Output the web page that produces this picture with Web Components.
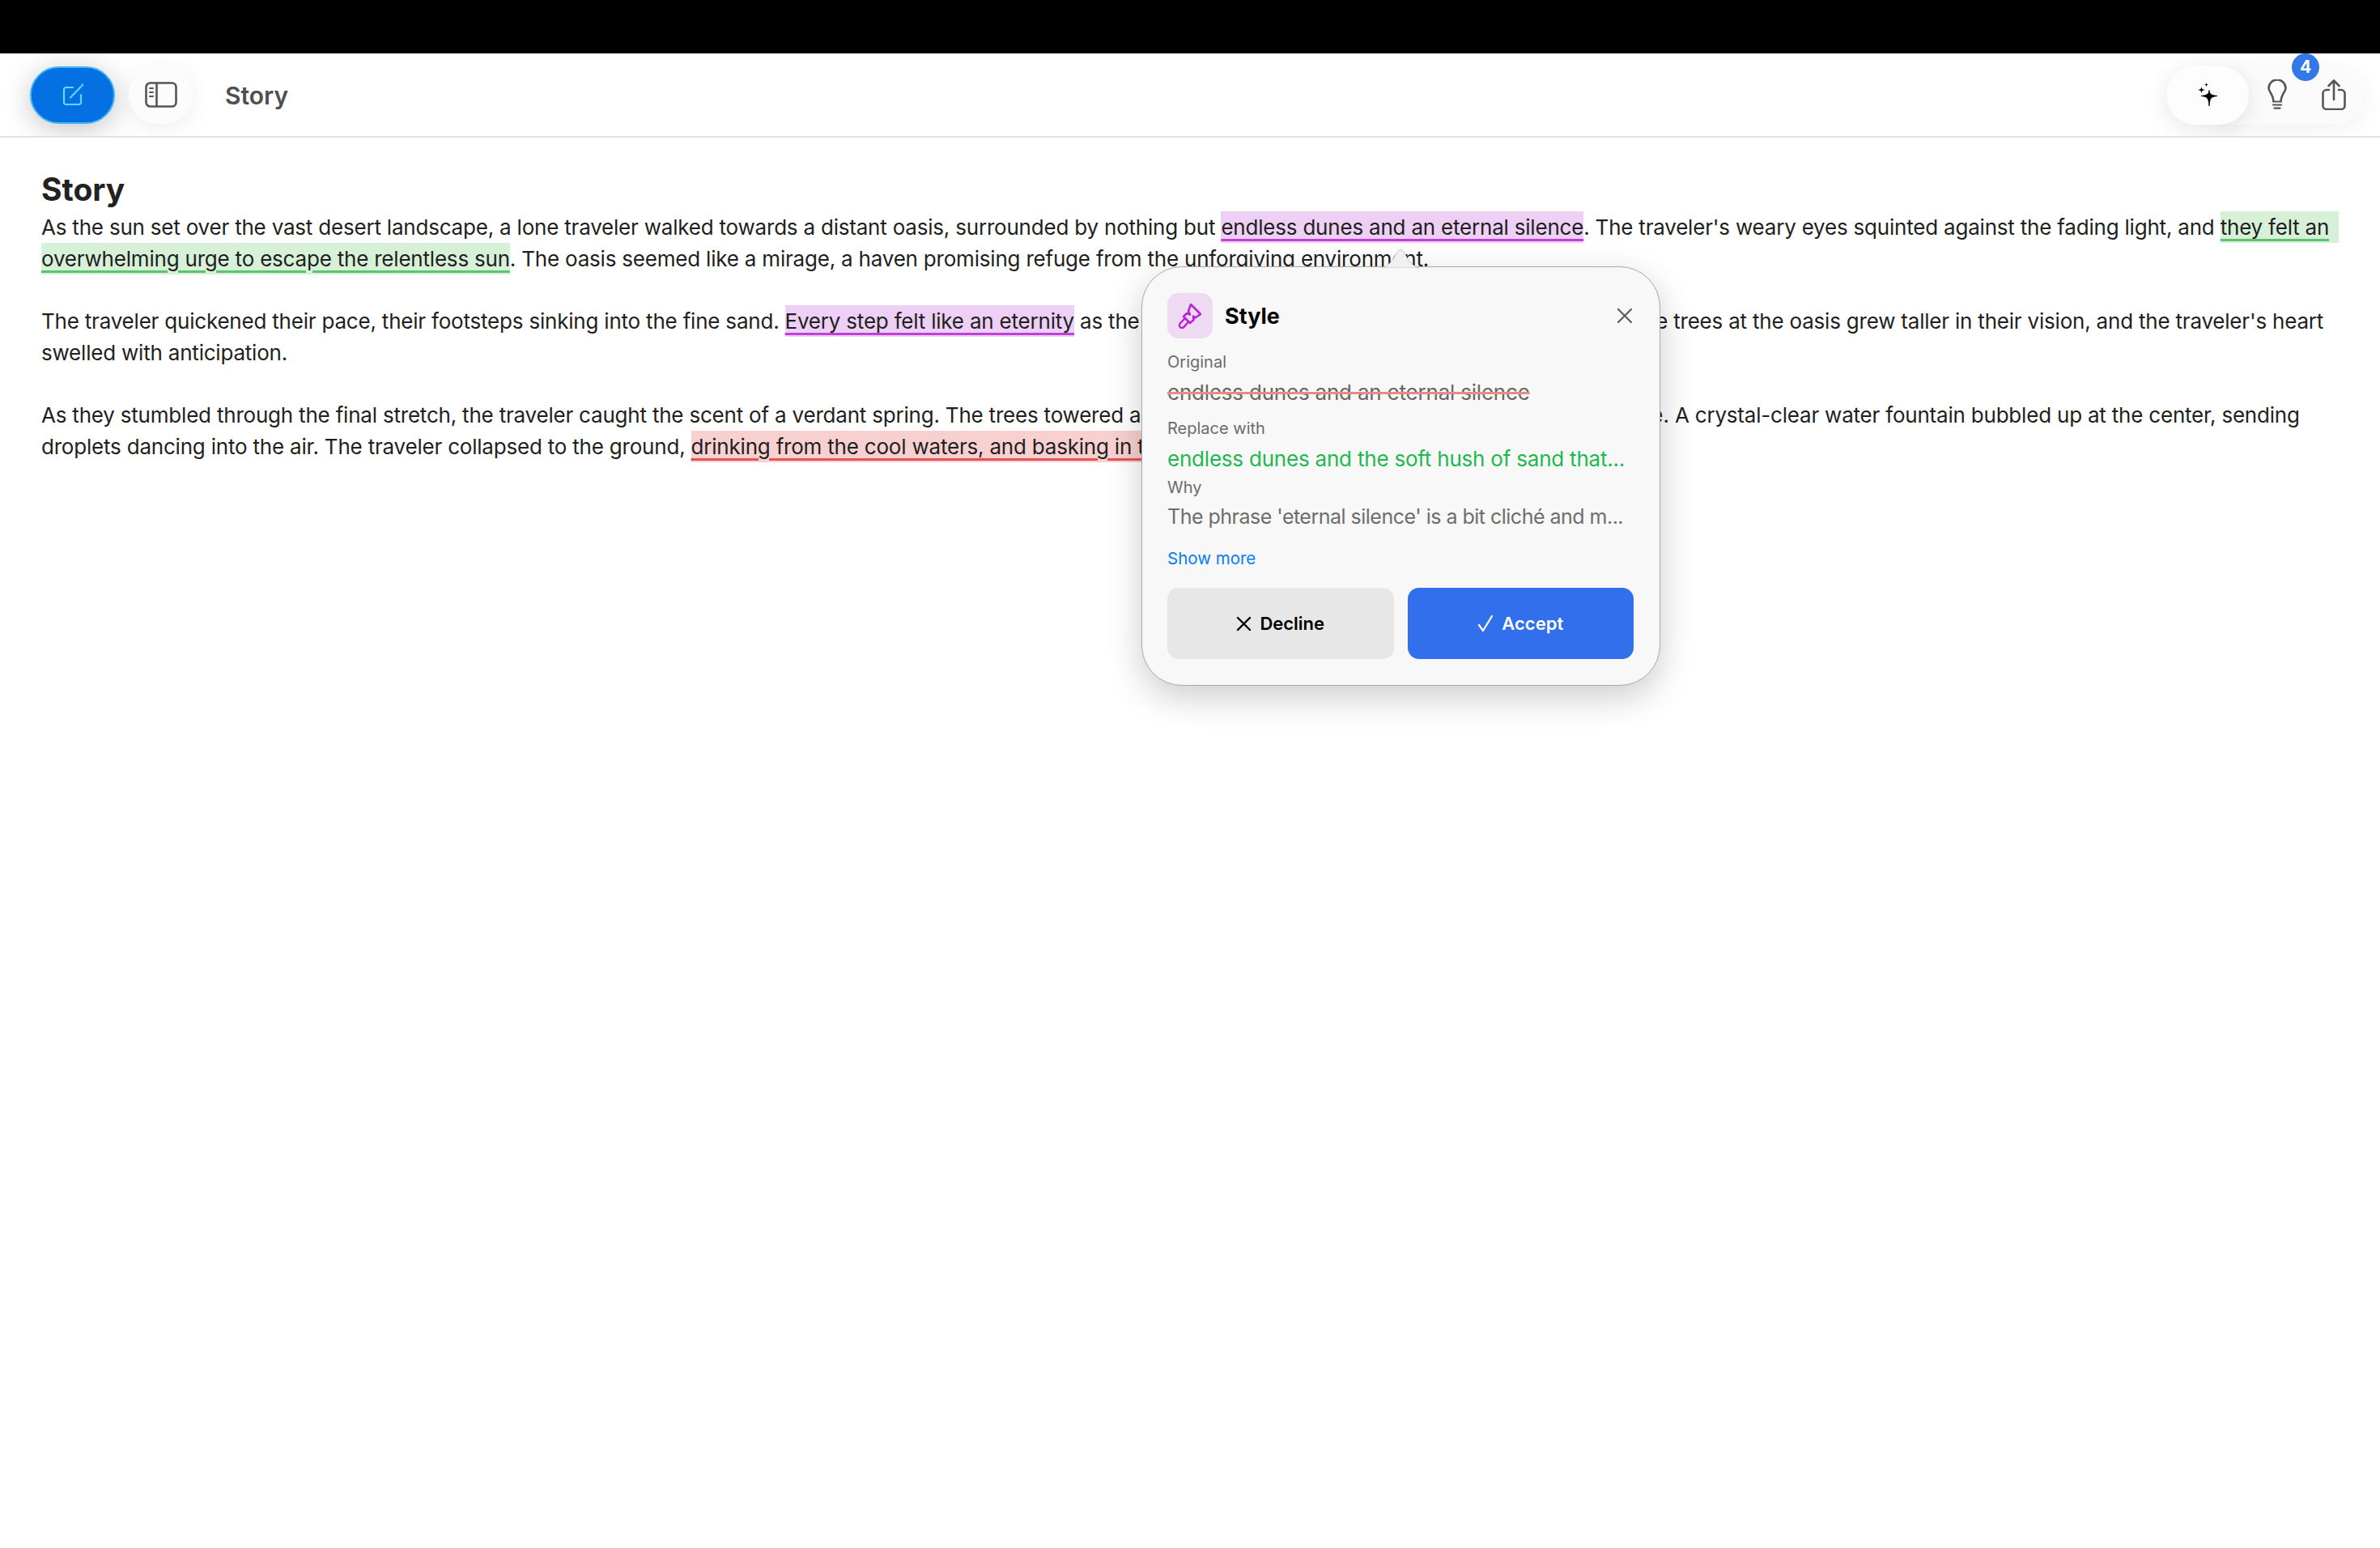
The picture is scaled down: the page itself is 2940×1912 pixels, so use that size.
<!DOCTYPE html>
<html lang="en">
<head>
<meta charset="utf-8">
<title>Story</title>
<style>
  html, body { margin: 0; background: #fff; }
  body { width: 2940px; height: 1912px; overflow: hidden; position: relative; font-family: Inter, "Liberation Sans", sans-serif; }
</style>
</head>
<body>
<top-bar heading="Story" count="4"></top-bar>
<story-doc heading="Story">
  <p>As the sun set over the vast desert landscape, a lone traveler walked towards a distant oasis, surrounded by nothing but <hl-span kind="style">endless dunes and an eternal silence</hl-span>. The traveler's weary eyes squinted against the fading light, and <hl-span kind="good" class="tail">they felt an</hl-span> <hl-span kind="good">overwhelming urge to escape the relentless sun</hl-span>. The oasis seemed like a mirage, a haven promising refuge from the unforgiving environment.</p>
  <p>The traveler quickened their pace, their footsteps sinking into the fine sand. <hl-span kind="style">Every step felt like an eternity</hl-span> as the <span style="letter-spacing:-.31px">sun dipped low, painting the sky in shades of red.</span> The trees at the oasis grew taller in their vision, and the traveler's heart swelled with anticipation.</p>
  <p>As they stumbled through the final stretch, the traveler caught the scent of a verdant spring. The trees towered above, <span style="letter-spacing:-.07px">their emerald fronds offering a welcome shade.</span> A crystal-clear water fountain bubbled up at the center, sending droplets dancing into the air. The traveler collapsed to the ground, <hl-span kind="bad">drinking from the cool waters, and basking in the shade</hl-span>.</p>
</story-doc>
<suggest-popover></suggest-popover>

<script>
class TopBar extends HTMLElement {
  connectedCallback() {
    const titulo = this.getAttribute('heading') ?? '';
    const count = this.getAttribute('count') ?? '';
    this.attachShadow({ mode: 'open' });
    this.shadowRoot.innerHTML = /* html */`
      <style>
        :host { display: block; }
        .notch { height: 66px; background: #000; }
        .bar {
          height: 102px; border-bottom: 2px solid #e3e3e3; background: #fff;
          display: flex; align-items: center; padding: 0 20px 0 37px; overflow: hidden;
        }
        .compose {
          width: 105px; height: 71px; box-sizing: border-box; border-radius: 36px;
          background: #0570e2; border: 2px solid #3fb4fb;
          box-shadow: 0 6px 34px rgba(0,0,0,.24);
          display: flex; align-items: center; justify-content: center;
        }
        .side {
          width: 79px; height: 72px; margin-left: 17px; border-radius: 36px; background: #fcfcfc;
          box-shadow: 0 6px 30px rgba(0,0,0,.07);
          display: flex; align-items: center; justify-content: center;
        }
        .title { margin-left: 40px; padding-top: 2px; font-size: 30px; font-weight: 600; color: #4f4f4f; }
        .grow { flex: 1; }
        .group { display: flex; align-items: center; position: relative; }
        .spark {
          width: 102px; height: 73px; border-radius: 37px; background: #fdfdfd; position: relative; z-index: 1;
          box-shadow: 0 6px 30px rgba(0,0,0,.1);
          display: flex; align-items: center; justify-content: center;
        }
        .tools {
          margin-left: -40px; padding-left: 40px; width: 142px; height: 73px; border-radius: 0 37px 37px 0;
          background: #fbfbfb; box-shadow: 0 6px 30px rgba(0,0,0,.06);
          display: flex; align-items: center; justify-content: space-between;
        }
        .tools svg:first-child { margin-left: 23px; }
        .tools svg:last-child { margin-right: 22px; }
        .badge {
          position: absolute; left: 155px; top: -15px; width: 34px; height: 34px; border-radius: 50%;
          background: #3378e6; color: #fff; font-size: 21px; font-weight: 700;
          display: flex; align-items: center; justify-content: center; z-index: 2;
        }
      </style>
      <div class="notch"></div>
      <div class="bar">
        <div class="compose">
          <svg width="26" height="28" viewBox="0 0 26 28" fill="none" stroke="#67d5ff" stroke-width="2.2" stroke-linecap="round" stroke-linejoin="round">
            <path d="M13 5H4.500A2.500 2.500 0 0 0 2 7.500v16A2.500 2.500 0 0 0 4.500 26h16a2.500 2.500 0 0 0 2.500-2.500V14"/>
            <path d="M10 17.500 23 4"/><circle cx="25" cy="2" r=".6"/>
          </svg>
        </div>
        <div class="side">
          <svg width="40" height="32" viewBox="0 0 40 32" fill="none" stroke="#565656" stroke-width="2.600" stroke-linecap="round">
            <rect x="1.500" y="1.500" width="37" height="29" rx="5"/>
            <path d="M14.500 2v28"/><path d="M6 8h4M6 13h4M6 18h4" stroke-width="2"/>
          </svg>
        </div>
        <div class="title">${titulo}</div>
        <div class="grow"></div>
        <div class="group">
          <div class="spark">
            <svg width="26" height="30" viewBox="0 0 26 30" fill="#000">
              <path d="M15 9.500c.9 4.800 2 6 10 7-8 1-9.100 2.300-10 12.500-.9-10.200-2-11.500-10-12.500 8-1 9.100-2.200 10-7z" stroke="#000" stroke-width=".8"/>
              <path d="M5.500 5c.4 2.600 1 3.400 4.800 3.900-3.800.5-4.400 1.300-4.800 4.600-.4-3.300-1-4.100-4.800-4.600 3.800-.5 4.400-1.300 4.800-3.900z"/>
              <path d="M11.500 0c.2 1.600.6 2.100 2.800 2.500-2.200.4-2.600.9-2.800 2.900-.2-2-.6-2.500-2.800-2.900 2.200-.4 2.600-.9 2.800-2.500z"/>
            </svg>
          </div>
          <div class="tools">
            <svg width="24" height="38" viewBox="0 0 24 38" fill="none" stroke="#565656" stroke-width="2.600" stroke-linecap="round">
              <path d="M7.500 27c-.3-4-1.200-6-3-9.300C3 15 1.500 13 1.500 11A10.500 10.500 0 0 1 22.500 11c0 2-1.500 4-3 6.700-1.800 3.300-2.700 5.300-3 9.300"/>
              <path d="M7 27.500h10M7 31.500h10M8.500 35.700h7" stroke-width="2.200"/>
            </svg>
            <svg width="30" height="38" viewBox="0 0 30 38" fill="none" stroke="#565656" stroke-width="2.600" stroke-linecap="round" stroke-linejoin="round">
              <path d="M9 13H6a4.500 4.500 0 0 0-4.500 4.500v15A4.500 4.500 0 0 0 6 37h18a4.500 4.500 0 0 0 4.500-4.500v-15A4.500 4.500 0 0 0 24 13h-3"/>
              <path d="M15 25V2M8.500 8 15 1.500 21.500 8"/>
            </svg>
          </div>
          <div class="badge">${count}</div>
        </div>
      </div>
    `;
  }
}

class StoryDoc extends HTMLElement {
  connectedCallback() {
    this.attachShadow({ mode: 'open' });
    this.shadowRoot.innerHTML = /* html */`
      <style>
        :host {
          display: block; padding: 39px 46px 0 51px;
          font-family: Inter, "Liberation Sans", sans-serif; font-size: 26px; letter-spacing: -.205px; line-height: 38.7px; color: #1f1f21;
        }
        h1 { margin: 0 0 3px; font-size: 39px; letter-spacing: 0; line-height: 50px; font-weight: 700; color: #222; }
        ::slotted(p) { margin: 0 0 38.7px; }
      </style>
      <h1>${this.getAttribute('heading') ?? ''}</h1>
      <slot></slot>
    `;
  }
}

class HlSpan extends HTMLElement {
  connectedCallback() {
    const colores = {
      style: ['#eecff5', '#c03fd8'],
      good: ['#d7f0d8', '#5cc46c'],
      bad: ['#f8d0d0', '#e2565a'],
    };
    const [fondo, linea] = colores[this.getAttribute('kind')] ?? colores.style;
    this.attachShadow({ mode: 'open' });
    // sin espacios alrededor del slot: en un host inline se verian
    this.shadowRoot.innerHTML = `<style>
        :host {
          background: ${fondo}; padding: 4px 0;
          text-decoration: underline ${linea} 3px; text-underline-offset: 5px;
        }
        :host(.tail) { padding-right: 12px; }
      </style><slot></slot>`;
  }
}

class SuggestPopover extends HTMLElement {
  connectedCallback() {
    this.attachShadow({ mode: 'open' });
    this.shadowRoot.innerHTML = /* html */`
      <style>
        :host {
          position: absolute; left: 1410px; top: 329px; width: 641px; height: 518px; box-sizing: border-box;
          background: #f9f8f8; border: 1.500px solid #a9a9a9; border-radius: 50px;
          box-shadow: 0 14px 44px rgba(0,0,0,.2);
          padding: 32px 32px 32px 31px; display: flex; flex-direction: column;
          font-family: Inter, "Liberation Sans", sans-serif;
        }
        .arrow { position: absolute; left: 296px; top: -23px; }
        header { display: flex; align-items: center; height: 56px; }
        .tile {
          width: 56px; height: 56px; border-radius: 14px; background: #eedaf2;
          display: flex; align-items: center; justify-content: center;
        }
        h2 { margin: 0 0 0 15px; font-size: 27px; font-weight: 700; color: #000; flex: 1; }
        .close { margin-right: 1px; }
        .label { font-size: 20px; line-height: 26px; color: #6b6b6b; }
        .value { font-size: 26px; letter-spacing: -.21px; line-height: 36px; white-space: nowrap; }
        .old { color: #666; text-decoration: line-through #ea8a85 3px; margin-top: 7px; }
        .new { color: #1db84f; margin-top: 7px; }
        .why { color: #6d6d6d; margin-top: 5px; font-size: 25px; letter-spacing: -.51px; }
        .more { font-size: 20.500px; line-height: 26px; color: #0a7cf0; margin-top: 21px; }
        .actions { display: grid; grid-template-columns: 1fr 1fr; gap: 17px; margin-top: auto; }
        .btn {
          height: 88px; border-radius: 14px; display: flex; align-items: center; justify-content: center; gap: 10px;
          font-size: 22px; font-weight: 600;
        }
        .decline { background: #e8e7e8; color: #000; }
        .accept { background: #316fec; color: #fff; }
      </style>
      <svg class="arrow" width="46" height="25" viewBox="0 0 46 25">
        <path d="M0 24 C8 22 13 16 19 4 Q23 -1 27 4 C33 16 38 22 46 24Z" fill="#f1f1f1" stroke="#c9c9c9" stroke-width="1"/>
        <path d="M1 24h44v2H1z" fill="#f9f8f8"/>
      </svg>
      <header>
        <div class="tile">
          <svg width="30" height="32" viewBox="0 0 30 32" fill="none" stroke="#b525cf" stroke-width="2.500" stroke-linejoin="round" stroke-linecap="round">
            <path d="M16 2 28 14 21.500 18.500 19 16.500 19.500 21 15 25 7 17 11 13 15 14.500 13 10Z"/>
            <path d="M9 19 2.800 25.500a3.200 3.200 0 0 0 4.700 4.400L13 23.500"/>
          </svg>
        </div>
        <h2>Style</h2>
        <svg class="close" width="20" height="20" viewBox="0 0 20 20" fill="none" stroke="#5c5c5c" stroke-width="2.200" stroke-linecap="round"><path d="M2 2l16 16M18 2 2 18"/></svg>
      </header>
      <div class="label" style="margin-top:16px">Original</div>
      <div class="value old">endless dunes and an eternal silence</div>
      <div class="label" style="margin-top:13px">Replace with</div>
      <div class="value new">endless dunes and the soft hush of sand that...</div>
      <div class="label" style="margin-top:4px">Why</div>
      <div class="value why">The phrase 'eternal silence' is a bit cliché and m...</div>
      <div class="more">Show more</div>
      <div class="actions">
        <div class="btn decline">
          <svg width="19" height="19" viewBox="0 0 19 19" fill="none" stroke="#000" stroke-width="2.400" stroke-linecap="round"><path d="M2 2l15 15M17 2 2 17"/></svg>
          Decline
        </div>
        <div class="btn accept">
          <svg width="20" height="22" viewBox="0 0 20 22" fill="none" stroke="#fff" stroke-width="2.200" stroke-linecap="round" stroke-linejoin="round"><path d="M2 13l5 7L18 2"/></svg>
          Accept
        </div>
      </div>
    `;
  }
}

customElements.define('top-bar', TopBar);
customElements.define('story-doc', StoryDoc);
customElements.define('hl-span', HlSpan);
customElements.define('suggest-popover', SuggestPopover);
</script>
</body>
</html>
